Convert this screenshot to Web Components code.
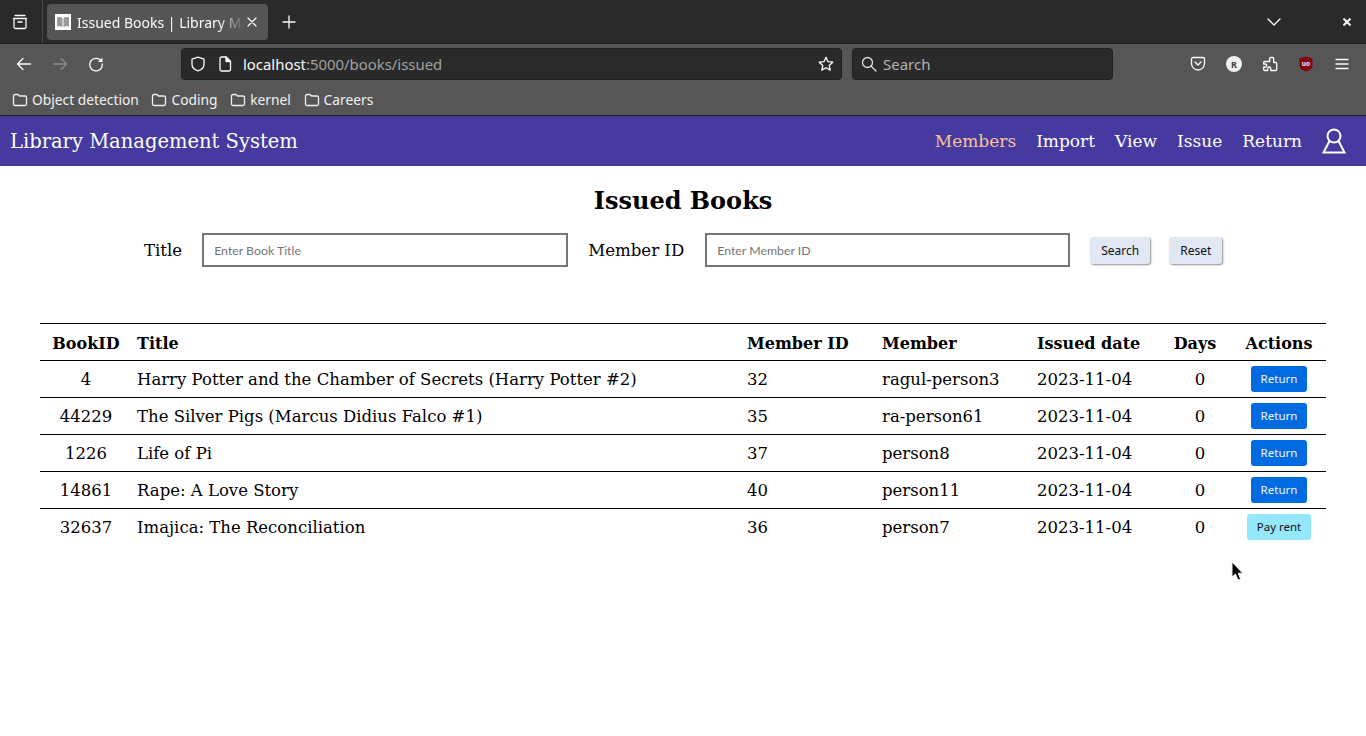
<!DOCTYPE html>
<html>
<head>
<meta charset="utf-8">
<title>Issued Books | Library Management System</title>
<style>
  html, body { margin: 0; height: 100%; background: #fff; overflow: hidden; }
  body { position: relative; font-family: "DejaVu Serif", serif; color: #000; }
  #cursor { position: absolute; left: 1231px; top: 561px; }
</style>
</head>
<body>
<browser-chrome></browser-chrome>
<app-navbar></app-navbar>
<page-title>Issued Books</page-title>
<search-form></search-form>
<books-table></books-table>
<svg id="cursor" width="13" height="22" viewBox="0 0 13 22"><path d="M1 1v15l3.5-3 2.5 6 2.6-1-2.5-5.800h4.600z" fill="#000" stroke="#eee" stroke-width="1"/></svg>

<script>
const stroke = 'fill="none" stroke="currentColor" stroke-width="1.3" stroke-linecap="round" stroke-linejoin="round"';
const folder = `<svg width="16" height="16" viewBox="0 0 16 16" ${stroke}><path d="M1.500 4a1.500 1.500 0 0 1 1.500-1.500h3l1.500 1.500H13a1.500 1.500 0 0 1 1.500 1.500V12a1.500 1.500 0 0 1-1.500 1.500H3A1.500 1.500 0 0 1 1.500 12z"/></svg>`;

class BrowserChrome extends HTMLElement {
  connectedCallback() {
    this.attachShadow({ mode: 'open' });
    this.shadowRoot.innerHTML = `
      <style>
        :host { display: block; font-family: "Noto Sans", sans-serif; color: #fbfbfb; }
        svg { display: block; flex: none; }
        .tabs { height: 43px; background: #2a2a2a; border-bottom: 1px solid #1c1c1c; display: flex; align-items: center; }
        .views { width: 43px; height: 43px; border-right: 1px solid #4a4a4a; box-sizing: border-box; display: flex; align-items: center; justify-content: center; padding-right: 2px; }
        .tab { margin-left: 4px; width: 221px; height: 36px; box-sizing: border-box; background: #555; border-radius: 4px; display: flex; align-items: center; padding-left: 8px; font-size: 14px; }
        .fav { width: 16px; height: 16px; background: #fff; margin-right: 6px; display: flex; align-items: center; justify-content: center; }
        .tab-text { width: 168px; padding-top: 1px; overflow: hidden; white-space: nowrap; -webkit-mask-image: linear-gradient(to right, #000 84%, transparent); mask-image: linear-gradient(to right, #000 84%, transparent); }
        .tab svg.x { margin-left: 2px; }
        .plus { margin-left: 14px; }
        .spacer { flex: 1; }
        .chev { margin-right: 62px; }
        .close { margin-right: 15px; }
        .tools { height: 40px; background: #565656; display: flex; align-items: center; }
        .back { margin-left: 16px; }
        .fwd { margin-left: 20px; color: #8c8c8c; }
        .reload { margin-left: 20px; }
        .bar { height: 32px; box-sizing: border-box; background: #2a2a2a; border: 1px solid #1f1f1f; border-radius: 4px; display: flex; align-items: center; }
        .url { width: 661px; margin-left: 77px; padding-left: 8px; font-size: 14.900px; }
        .url svg.page { margin-left: 12px; margin-right: 11px; }
        .url .host { white-space: nowrap; }
        .url .dim { color: #a2a2a2; }
        .url .star { margin-left: auto; margin-right: 7px; }
        .find { width: 261px; margin-left: 10px; padding-left: 8px; font-size: 15px; color: #b4b4b4; }
        .find svg { margin-right: 6px; color: #ddd; }
        .right { margin-left: 77px; display: flex; align-items: center; gap: 20px; }
        .avatar { width: 16px; height: 16px; border-radius: 50%; background: #f0f0f0; color: #444; font: bold 9px "Noto Sans", sans-serif; display: flex; align-items: center; justify-content: center; }
        .marks { background: #565656; border-bottom: 1px solid #1c1c1c; display: flex; align-items: center; padding-left: 12px; gap: 13px; font-size: 13.800px; box-sizing: border-box; height: 32px; }
        .mark { display: flex; align-items: center; gap: 4px; color: #f0f0f0; }
        .mark + .mark { margin-left: -.4px; }
      </style>
      <div class="tabs">
        <div class="views">
          <svg width="16" height="16" viewBox="0 0 16 16" ${stroke}><path d="M3 1.500h10M1.500 4.500h13M2 4.500v8.500a1.500 1.500 0 0 0 1.500 1.500h9a1.500 1.500 0 0 0 1.500-1.500V4.500M6 8h4"/></svg>
        </div>
        <div class="tab">
          <div class="fav"><svg width="14" height="12" viewBox="0 0 14 12"><path d="M1 1.500c2-.6 4-.6 5.500.5v9C5 10 3 10 1 10.500zM13 1.500c-2-.6-4-.6-5.500.5v9c1.500-1 3.500-1 5.500-.5z" fill="#9a9a9a"/></svg></div>
          <div class="tab-text">Issued Books | Library Management System</div>
          <svg class="x" width="10" height="10" viewBox="0 0 10 10" ${stroke}><path d="M1 1l8 8M9 1l-8 8"/></svg>
        </div>
        <svg class="plus" width="14" height="14" viewBox="0 0 14 14" ${stroke}><path d="M7 1v12M1 7h12"/></svg>
        <div class="spacer"></div>
        <svg class="chev" width="14" height="8" viewBox="0 0 14 8" ${stroke}><path d="M1 1l6 6 6-6"/></svg>
        <svg class="close" width="8" height="8" viewBox="0 0 8 8" fill="none" stroke="currentColor" stroke-width="2"><path d="M.5.500l7 7M7.500.500l-7 7"/></svg>
      </div>
      <div class="tools">
        <svg class="back" width="16" height="16" viewBox="0 0 16 16" ${stroke}><path d="M14.500 8H1.500M7 2.500L1.500 8 7 13.500"/></svg>
        <svg class="fwd" width="16" height="16" viewBox="0 0 16 16" ${stroke}><path d="M1.500 8h13M9 2.500L14.500 8 9 13.500"/></svg>
        <svg class="reload" width="16" height="16" viewBox="0 0 16 16" ${stroke}><path d="M13.500 5.500A6.300 6.300 0 1 0 14.300 8"/><path d="M14.500 1.500v4.500H10z" fill="currentColor" stroke="none"/></svg>
        <div class="bar url">
          <svg width="16" height="16" viewBox="0 0 16 16" ${stroke}><path d="M8 1.200l6 2v5c0 3.200-2.500 5.500-6 6.600-3.500-1.100-6-3.400-6-6.600v-5z"/></svg>
          <svg class="page" width="14" height="16" viewBox="0 0 14 16" ${stroke}><path d="M2 2.500A1.500 1.500 0 0 1 3.500 1H8l4.500 4.500v8a1.500 1.500 0 0 1-1.500 1.500H3.500A1.500 1.500 0 0 1 2 13.500z"/><path d="M8 1v4.500h4.500z" fill="currentColor"/></svg>
          <span class="host">localhost<span class="dim">:5000/books/issued</span></span>
          <svg class="star" width="16" height="16" viewBox="0 0 16 16" ${stroke}><path d="M8 1.300l2 4.400 4.800.5-3.600 3.200 1 4.700L8 11.700l-4.200 2.400 1-4.700L1.200 6.200 6 5.700z"/></svg>
        </div>
        <div class="bar find">
          <svg width="16" height="16" viewBox="0 0 16 16" ${stroke}><circle cx="6.500" cy="6.500" r="5"/><path d="M10.200 10.200l4.800 4.800"/></svg>
          <span>Search</span>
        </div>
        <div class="right">
          <svg width="16" height="16" viewBox="0 0 16 16" ${stroke}><path d="M1.500 3a1.500 1.500 0 0 1 1.500-1.500h10A1.500 1.500 0 0 1 14.500 3v4.500a6.500 6.500 0 0 1-13 0z"/><path d="M5 6l3 3 3-3"/></svg>
          <div class="avatar">R</div>
          <svg width="16" height="16" viewBox="0 0 16 16" ${stroke}><path d="M8.500 1.500h2a1 1 0 0 1 1 1v4h2a1 1 0 0 1 1 1v6a1 1 0 0 1-1 1h-5v-2a1.500 1.500 0 0 0-3 0v2h-3a1 1 0 0 1-1-1v-2.500h1.500a1.500 1.500 0 0 0 0-3H1.500V6.500a1 1 0 0 1 1-1h5V2.500a1 1 0 0 1 1-1z" transform="translate(.2 0)"/></svg>
          <svg width="16" height="16" viewBox="0 0 16 16"><path d="M8 .500l6.500 2v7c0 3-3 5-6.500 6-3.500-1-6.500-3-6.500-6v-7z" fill="#800511"/><text x="8" y="10" font-size="6.500" font-weight="700" font-family="Noto Sans" text-anchor="middle" fill="#eee">uo</text></svg>
          <svg width="16" height="16" viewBox="0 0 16 16" ${stroke}><path d="M2 3.500h12M2 8h12M2 12.500h12"/></svg>
        </div>
      </div>
      <div class="marks">
        <div class="mark">${folder}<span>Object detection</span></div>
        <div class="mark">${folder}<span>Coding</span></div>
        <div class="mark">${folder}<span>kernel</span></div>
        <div class="mark">${folder}<span>Careers</span></div>
      </div>`;
  }
}

class AppNavbar extends HTMLElement {
  connectedCallback() {
    this.attachShadow({ mode: 'open' });
    const links = ['Members', 'Import', 'View', 'Issue', 'Return'];
    this.shadowRoot.innerHTML = `
      <style>
        :host { display: flex; align-items: center; height: 50px; background: #46399f; color: #fff; padding: 0 20px 0 10px; font-size: 17px; }
        .brand { font-size: 19.500px; }
        nav { margin-left: auto; display: flex; align-items: center; gap: 20px; }
        .on { color: #f6c59c; }
        svg { display: block; }
      </style>
      <span class="brand">Library Management System</span>
      <nav>
        ${links.map((l, i) => `<span class="${i === 0 ? 'on' : ''}">${l}</span>`).join('')}
        <svg width="24" height="26" viewBox="0 0 24 26" fill="none" stroke="#fff" stroke-width="2"><circle cx="12" cy="8" r="6.500"/><path d="M7.500 13L1.500 24.500h21L16.500 13"/></svg>
      </nav>`;
  }
}

class PageTitle extends HTMLElement {
  connectedCallback() {
    this.attachShadow({ mode: 'open' });
    this.shadowRoot.innerHTML = `
      <style>
        :host { display: block; text-align: center; padding-top: 18px; height: 51px; box-sizing: border-box; font-size: 24px; font-weight: 700; line-height: 34px; }
      </style>
      <slot></slot>`;
  }
}

class SearchForm extends HTMLElement {
  connectedCallback() {
    this.attachShadow({ mode: 'open' });
    this.shadowRoot.innerHTML = `
      <style>
        :host { display: flex; align-items: center; height: 34px; margin-top: 16px; padding-left: 144px; font-size: 16.600px; }
        label { margin-right: 20px; white-space: nowrap; }
        label.second { margin-right: 21px; }
        input { box-sizing: border-box; width: 366px; height: 34px; border: 2px solid #767676; padding: 0 10px; margin: 0 20px 0 0; font: 12.300px Lato, sans-serif; background: #fff; outline: none; }
        input::placeholder { color: #757575; opacity: 1; }
        input.second { width: 365px; }
        button { height: 27px; box-sizing: border-box; border: 0; border-radius: 3px; background: #e1e7f3; color: #111; font: 12px "Noto Sans", sans-serif; padding: 0 11px; margin-right: 19px; box-shadow: 1px 1px 2px rgba(0,0,0,.45); }
      </style>
      <label>Title</label><input placeholder="Enter Book Title">
      <label class="second">Member ID</label><input class="second" placeholder="Enter Member ID">
      <button>Search</button><button>Reset</button>`;
  }
}

const rows = [
  ['4', 'Harry Potter and the Chamber of Secrets (Harry Potter #2)', '32', 'ragul-person3', '2023-11-04', '0', 'Return'],
  ['44229', 'The Silver Pigs (Marcus Didius Falco #1)', '35', 'ra-person61', '2023-11-04', '0', 'Return'],
  ['1226', 'Life of Pi', '37', 'person8', '2023-11-04', '0', 'Return'],
  ['14861', 'Rape: A Love Story', '40', 'person11', '2023-11-04', '0', 'Return'],
  ['32637', 'Imajica: The Reconciliation', '36', 'person7', '2023-11-04', '0', 'Pay rent']
];

class BooksTable extends HTMLElement {
  connectedCallback() {
    this.attachShadow({ mode: 'open' });
    this.shadowRoot.innerHTML = `
      <style>
        :host { display: block; margin: 56px 40px 0; font-size: 16.500px; }
        table { width: 1286px; border-collapse: collapse; table-layout: fixed; }
        th, td { height: 37px; padding: 0 0 0 12px; text-align: left; white-space: nowrap; box-sizing: border-box; }
        thead tr { border-top: 1px solid #000; }
        tr { border-bottom: 1px solid #000; }
        tbody tr:last-child { border-bottom: 0; }
        th { font-weight: 700; font-size: 16px; padding-top: 2px; }
        .c { text-align: center; padding-left: 0; }
        .first { padding-left: 7px; }
        td.days { padding-left: 10px; }
        .btn { display: inline-block; vertical-align: middle; height: 26px; border-radius: 3px; font: 11.500px/26px "Noto Sans", sans-serif; padding: 0 10px; background: #006be0; color: #f4f8ff; }
        .btn.pay { background: #95e8fb; color: #111; }
      </style>
      <table>
        <colgroup><col style="width:85px"><col style="width:610px"><col style="width:135px"><col style="width:155px"><col style="width:133px"><col style="width:74px"><col style="width:94px"></colgroup>
        <thead><tr><th class="c first">BookID</th><th>Title</th><th>Member ID</th><th>Member</th><th>Issued date</th><th class="c">Days</th><th class="c">Actions</th></tr></thead>
        <tbody>
          ${rows.map(r => `<tr><td class="c first">${r[0]}</td><td>${r[1]}</td><td>${r[2]}</td><td>${r[3]}</td><td>${r[4]}</td><td class="c days">${r[5]}</td><td class="c"><span class="btn ${r[6] === 'Pay rent' ? 'pay' : ''}">${r[6]}</span></td></tr>`).join('')}
        </tbody>
      </table>`;
  }
}

customElements.define('browser-chrome', BrowserChrome);
customElements.define('app-navbar', AppNavbar);
customElements.define('page-title', PageTitle);
customElements.define('search-form', SearchForm);
customElements.define('books-table', BooksTable);
</script>
</body>
</html>
